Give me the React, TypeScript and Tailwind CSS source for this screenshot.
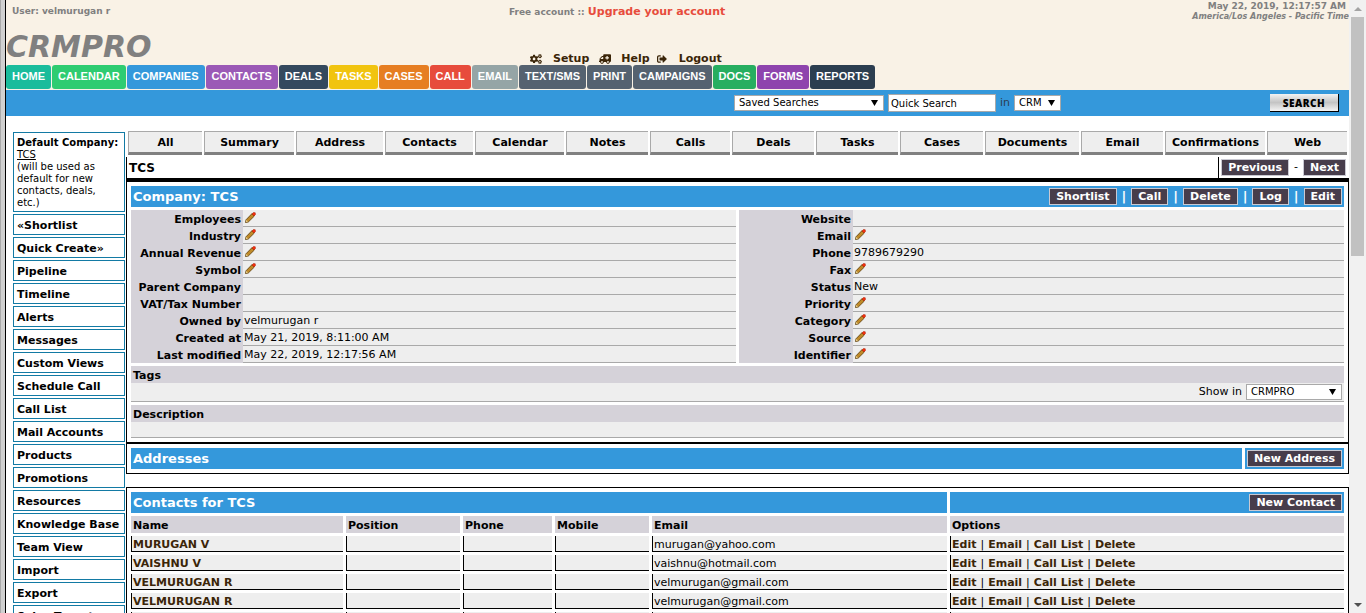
import React from "react";
import { FaCogs, FaAmbulance, FaSignOutAlt } from "react-icons/fa";

const modules: [string, string][] = [
  ["HOME", "bg-[#1abc9c]"],
  ["CALENDAR", "bg-[#2ecc71]"],
  ["COMPANIES", "bg-[#3498db]"],
  ["CONTACTS", "bg-[#9b59b6]"],
  ["DEALS", "bg-[#34495e]"],
  ["TASKS", "bg-[#f1c40f]"],
  ["CASES", "bg-[#e67e22]"],
  ["CALL", "bg-[#e74c3c]"],
  ["EMAIL", "bg-[#95a5a6]"],
  ["TEXT/SMS", "bg-[#556270]"],
  ["PRINT", "bg-[#556270]"],
  ["CAMPAIGNS", "bg-[#556270]"],
  ["DOCS", "bg-[#27ae60]"],
  ["FORMS", "bg-[#8e44ad]"],
  ["REPORTS", "bg-[#2c3e50]"],
];

const tabs = [
  "All", "Summary", "Address", "Contacts", "Calendar", "Notes", "Calls",
  "Deals", "Tasks", "Cases", "Documents", "Email", "Confirmations", "Web",
];

const sideLinks = [
  "«Shortlist", "Quick Create»", "Pipeline", "Timeline", "Alerts", "Messages",
  "Custom Views", "Schedule Call", "Call List", "Mail Accounts", "Products",
  "Promotions", "Resources", "Knowledge Base", "Team View", "Import", "Export",
  "Sales Targets",
];

type Field = { label: string; value?: string; editable?: boolean };

const leftFields: Field[] = [
  { label: "Employees", editable: true },
  { label: "Industry", editable: true },
  { label: "Annual Revenue", editable: true },
  { label: "Symbol", editable: true },
  { label: "Parent Company" },
  { label: "VAT/Tax Number" },
  { label: "Owned by", value: "velmurugan r" },
  { label: "Created at", value: "May 21, 2019, 8:11:00 AM" },
  { label: "Last modified", value: "May 22, 2019, 12:17:56 AM" },
];

const rightFields: Field[] = [
  { label: "Website" },
  { label: "Email", editable: true },
  { label: "Phone", value: "9789679290" },
  { label: "Fax", editable: true },
  { label: "Status", value: "New" },
  { label: "Priority", editable: true },
  { label: "Category", editable: true },
  { label: "Source", editable: true },
  { label: "Identifier", editable: true },
];

const contacts = [
  { name: "MURUGAN V", email: "murugan@yahoo.com" },
  { name: "VAISHNU V", email: "vaishnu@hotmail.com" },
  { name: "VELMURUGAN R", email: "velmurugan@gmail.com" },
  { name: "VELMURUGAN R", email: "velmurugan@gmail.com" },
  { name: "", email: "" },
];

function Pencil() {
  return (
    <svg width="11" height="11" viewBox="0 0 11 11" aria-hidden="true">
      <path d="M0.5 10.5 L1 7.8 L7 1.6 L9.4 4 L3.3 10 Z" fill="#c08a28" stroke="#5a3c0a" strokeWidth="0.8" />
      <path d="M0.9 10.1 L1.4 8 L3 9.6 Z" fill="#f4dfa0" />
      <path d="M7 2 L8.4 0.5 L10.2 0.7 L10.5 2.5 L9 4 Z" fill="#f5300c" stroke="#a01c08" strokeWidth="0.5" />
    </svg>
  );
}

function SelectBox({ label, value, className }: { label: string; value: string; className: string }) {
  return (
    <span className={`relative block ${className}`}>
      <select
        aria-label={label}
        className="block h-4 w-full appearance-none border border-[#a9a9a9] bg-white pl-1 text-[10px] leading-[14px] text-black"
      >
        <option>{value}</option>
      </select>
      <svg className="pointer-events-none absolute top-[5px] right-[6px]" width="7" height="6" viewBox="0 0 7 6" aria-hidden="true">
        <path d="M0 0 H7 L3.5 6 Z" fill="#000" />
      </svg>
    </span>
  );
}

function DarkButton({ children }: { children: React.ReactNode }) {
  return (
    <button className="h-[17px] border border-[#c9c9d2] bg-[#473d4b] px-[6px] text-[11px] leading-[15px] font-bold whitespace-nowrap text-white">
      {children}
    </button>
  );
}

function FieldTable({ fields, labelWidth }: { fields: Field[]; labelWidth: string }) {
  return (
    <table className="w-full border-separate border-spacing-0">
      <tbody>
        {fields.map((f) => (
          <tr key={f.label} className="h-[17px]">
            <th scope="row" className={`${labelWidth} bg-[#d5d2d9] p-0 pt-[3px] pr-[2px] text-right leading-[14px] font-bold whitespace-nowrap`}>
              {f.label}
            </th>
            <td className="border-b border-[#a9a9a9] bg-[#eee] p-0 pl-[1px] text-left leading-4">
              {f.editable ? (
                <button aria-label={`Edit ${f.label}`} className="flex h-4 items-center pb-[2px] pl-[1px]">
                  <Pencil />
                </button>
              ) : (
                <span className="block h-4 leading-[17px]">{f.value}</span>
              )}
            </td>
          </tr>
        ))}
      </tbody>
    </table>
  );
}

function Header() {
  return (
    <header className="flex h-[90px] flex-col justify-between bg-[#f9f2e6] pb-[2px]">
      <div className="flex">
        <div className="min-w-0 flex-4">
          <div className="pt-1 pl-[6px] text-[9px] leading-[14px] font-bold text-[#808080]">User: velmurugan r</div>
          <div className="pt-3 text-[30px] leading-[34px] font-bold text-[#808080] italic">CRMPRO</div>
        </div>
        <div className="pl-1">
          <div className="pt-1 text-[9px] leading-[15px] font-bold text-[#808080]">
            Free account ::{" "}
            <a href="#upgrade" className="text-[11px] text-[#e74c3c]">Upgrade your account</a>
          </div>
          <nav className="flex items-center pt-[33px] pl-[21px] text-[11px] leading-3 font-bold text-[#3b2508]">
            <FaCogs size={12} />
            <a href="#setup" className="pl-[11px]">Setup</a>
            <FaAmbulance size={12} className="ml-[10px] -scale-x-100" />
            <a href="#help" className="pl-[10px]">Help</a>
            <FaSignOutAlt size={10} className="ml-[7px]" />
            <a href="#logout" className="pl-3">Logout</a>
          </nav>
        </div>
        <div className="min-w-0 flex-5 text-right font-bold text-[#808080]">
          <div className="pr-[3px] text-[9px] leading-3">May 22, 2019, 12:17:57 AM</div>
          <div className="text-[8px] leading-[9px] italic">America/Los Angeles - Pacific Time</div>
        </div>
      </div>
      <nav className="flex gap-px font-['Liberation_Sans',Arial,sans-serif] text-[11px] leading-[23px] font-bold text-white">
        {modules.map(([name, color]) => (
          <a key={name} href="#module" className={`${color} h-6 rounded-[3px] px-[6px]`}>{name}</a>
        ))}
      </nav>
    </header>
  );
}

function SearchBar() {
  return (
    <form className="flex h-[26px] items-center justify-end bg-[#3498db] pr-[10px]">
      <SelectBox label="Saved searches" value="Saved Searches" className="w-[150px]" />
      <input
        aria-label="Quick Search"
        defaultValue="Quick Search"
        className="ml-1 h-[18px] w-[108px] border border-[#a9a9a9] bg-white px-[2px] text-[10px] text-black"
      />
      <span className="px-1 text-[11px] text-[#2c3e50]">in</span>
      <SelectBox label="Search scope" value="CRM" className="w-[47px]" />
      <button
        type="button"
        className="ml-[209px] h-[18px] w-[69px] border-r border-b border-black bg-linear-to-b from-[#f2f2f2] via-[#c4c4c4] to-[#f4f4f4] font-['Open_Sans',sans-serif] text-[10px] leading-4 font-extrabold tracking-wider text-black"
      >
        SEARCH
      </button>
    </form>
  );
}

function Sidebar() {
  return (
    <aside className="flex w-28 shrink-0 flex-col gap-[2px] pt-px">
      <div className="border border-[#137aa4] px-[3px] pt-1 pb-[2px] text-[10px] leading-3">
        <b>Default Company:</b>
        <br />
        <a href="#tcs" className="underline">TCS</a>
        <br />
        (will be used as default for new contacts, deals, etc.)
      </div>
      {sideLinks.map((name) => (
        <a key={name} href="#side" className="h-[21px] border border-[#137aa4] px-[3px] leading-[21px] font-bold whitespace-nowrap">
          {name}
        </a>
      ))}
    </aside>
  );
}

function Company() {
  return (
    <section className="flex flex-col gap-[3px] border-r border-b-2 border-l border-black px-1 py-1">
      <div className="flex h-[21px] items-center justify-between bg-[#3498db] px-[2px] text-white">
        <h2 className="text-[13px] font-bold">Company: TCS</h2>
        <div className="flex items-center gap-[5px] font-bold">
          {["Shortlist", "Call", "Delete", "Log", "Edit"].map((name, i) => (
            <React.Fragment key={name}>
              {i > 0 && <span className="text-[13px] leading-3">|</span>}
              <DarkButton>{name}</DarkButton>
            </React.Fragment>
          ))}
        </div>
      </div>
      <div className="grid grid-cols-2 gap-[3px]">
        <FieldTable fields={leftFields} labelWidth="w-28" />
        <FieldTable fields={rightFields} labelWidth="w-[114px]" />
      </div>
      <div>
        <h3 className="h-[17px] bg-[#d5d2d9] pl-[2px] leading-[19px] font-bold">Tags</h3>
        <div className="flex h-[19px] items-center justify-end gap-1 border-b border-[#a9a9a9] bg-[#eee] pr-[2px]">
          <span>Show in</span>
          <SelectBox label="Show tags in" value="CRMPRO" className="w-[96px]" />
        </div>
      </div>
      <div>
        <h3 className="h-[17px] bg-[#d5d2d9] pl-[2px] leading-[19px] font-bold">Description</h3>
        <div className="h-4 border-b border-[#a9a9a9] bg-[#eee]" />
      </div>
    </section>
  );
}

function ContactOptions() {
  return (
    <>
      {["Edit", "Email", "Call List", "Delete"].map((o, j) => (
        <React.Fragment key={o}>
          {j > 0 && <span className="px-1">|</span>}
          <a href="#option" className="font-bold text-[#3b2508]">{o}</a>
        </React.Fragment>
      ))}
    </>
  );
}

function Contacts() {
  return (
    <section className="mt-[13px] border border-black p-px">
      <table className="w-full table-fixed border-separate border-spacing-[3px]">
        <colgroup>
          <col className="w-[212px]" />
          <col className="w-[114px]" />
          <col className="w-[89px]" />
          <col className="w-[94px]" />
          <col className="w-[295px]" />
          <col />
        </colgroup>
        <thead>
          <tr className="h-[21px] bg-[#3498db] text-white">
            <th colSpan={5} className="p-0 pl-[2px] text-left text-[13px] leading-5 font-bold">Contacts for TCS</th>
            <th className="p-0 pr-[2px]">
              <div className="flex justify-end"><DarkButton>New Contact</DarkButton></div>
            </th>
          </tr>
          <tr className="h-[17px] bg-[#d5d2d9]">
            {["Name", "Position", "Phone", "Mobile", "Email", "Options"].map((h) => (
              <th key={h} className="p-0 pt-[3px] pl-[2px] text-left leading-[14px] font-bold">{h}</th>
            ))}
          </tr>
        </thead>
        <tbody>
          {contacts.map((c, i) => (
            <tr key={i} className="h-4 bg-[#eee] *:border-b *:border-l *:border-black *:pt-[2px] *:pr-0 *:pb-0 *:pl-px *:leading-[13px] *:whitespace-nowrap">
              <td><a href="#contact" className="font-bold text-[#3b2508]">{c.name}</a></td>
              <td /><td /><td />
              <td>{c.email}</td>
              <td>{c.name && <ContactOptions />}</td>
            </tr>
          ))}
        </tbody>
      </table>
    </section>
  );
}

export default function App() {
  return (
    <div className="flex h-screen overflow-hidden bg-white font-['DejaVu_Sans',Verdana,sans-serif] text-[11px] text-black">
      <div className="w-[6px] shrink-0 border-r border-l border-r-black border-l-[#a9a9a9] bg-[#d0d0d0]" />
      <div className="min-w-0 flex-1">
        <Header />
        <SearchBar />
        <div className="flex gap-px pt-[15px] pl-[7px]">
          <Sidebar />
          <main className="min-w-0 flex-1">
            <nav className="grid grid-cols-[74fr_90fr_87fr_88fr_89fr_82fr_80fr_82fr_82fr_83fr_94fr_82fr_100fr_80fr] gap-[2px] px-[2px]">
              {tabs.map((t) => (
                <a key={t} href="#tab" className="h-6 border-t border-b-3 border-l border-t-[#a9a9a9] border-b-[#808080] border-l-[#a9a9a9] bg-[#eee] text-center leading-[21px] font-bold whitespace-nowrap">
                  {t}
                </a>
              ))}
            </nav>
            <div className="mt-[2px] flex h-[25px] border-b-4 border-l border-black">
              <h1 className="flex-1 pl-[2px] text-[12px] leading-[22px] font-bold">TCS</h1>
              <div className="flex items-center gap-[5px] border-l border-black pr-[3px] pl-[2px]">
                <DarkButton>Previous</DarkButton>
                <span>-</span>
                <DarkButton>Next</DarkButton>
              </div>
            </div>
            <Company />
            <section className="flex gap-[3px] border-r border-b border-l border-black p-1">
              <h2 className="h-[21px] flex-1 bg-[#3498db] pl-[2px] text-[13px] leading-[21px] font-bold text-white">Addresses</h2>
              <div className="flex items-center bg-[#3498db] px-[2px]"><DarkButton>New Address</DarkButton></div>
            </section>
            <Contacts />
          </main>
        </div>
      </div>
      <div className="flex w-[17px] shrink-0 flex-col items-center bg-[#f1f1f1]" aria-hidden="true">
        <div className="flex h-[17px] items-center">
          <svg width="8" height="4" viewBox="0 0 8 4"><path d="M4 0 L8 4 H0 Z" fill="#a3a3a3" /></svg>
        </div>
        <div className="h-[239px] w-[13px] bg-[#c1c1c1]" />
        <div className="mt-auto flex h-[17px] items-center">
          <svg width="8" height="4" viewBox="0 0 8 4"><path d="M0 0 H8 L4 4 Z" fill="#505050" /></svg>
        </div>
      </div>
    </div>
  );
}
